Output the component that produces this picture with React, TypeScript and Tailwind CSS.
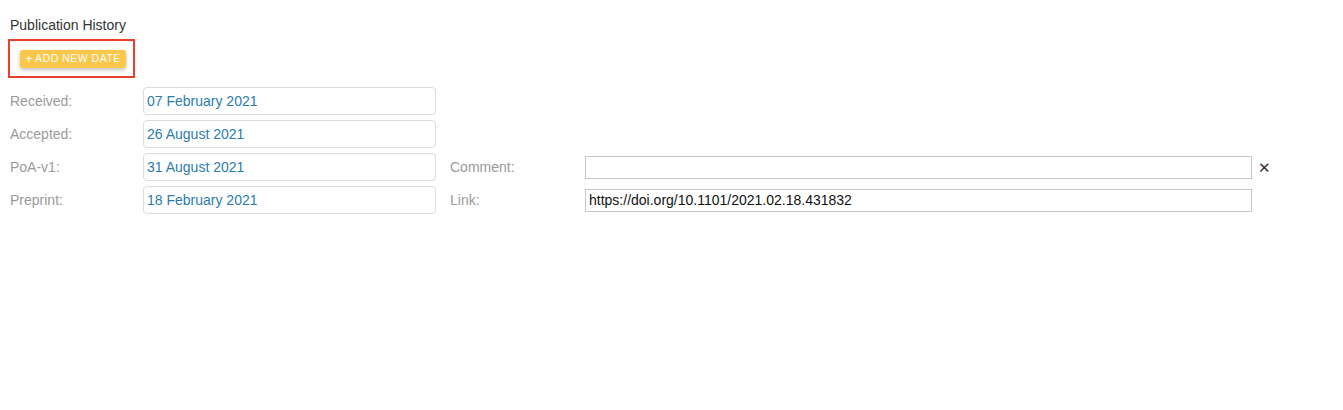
const rows = [
  { label: "Received:", date: "07 February 2021" },
  { label: "Accepted:", date: "26 August 2021" },
  { label: "PoA-v1:", date: "31 August 2021", extra: { label: "Comment:", value: "", remove: true } },
  { label: "Preprint:", date: "18 February 2021", extra: { label: "Link:", value: "https://doi.org/10.1101/2021.02.18.431832" } },
];

export default function App() {
  return (
    <div className="w-[1343px] h-[410px] bg-white pl-[10px] pt-[16px] font-['Helvetica','Liberation_Sans',Arial,sans-serif]">
      <h2 className="text-[14px] leading-[18px] text-[#333]">Publication History</h2>
      <div className="mt-[5px] ml-[-2px] w-[127px] h-[39px] border-2 border-[#e8402f] flex items-center pl-[10px]">
        <button className="h-[18px] px-[5px] rounded-[3px] bg-[#fbc74a] text-white text-[10.5px] font-medium tracking-[0.5px] flex items-center gap-[2px] shadow-[0_2px_4px_rgba(0,0,0,0.25)]">
          <span className="text-[13px] leading-none font-light">+</span>
          ADD NEW DATE
        </button>
      </div>
      <div className="mt-[9px] flex flex-col gap-[5px]">
        {rows.map((r) => (
          <div key={r.label} className="flex items-center h-[28px]">
            <div className="w-[133px] text-[14px] text-[#9a9a9a]">{r.label}</div>
            <div className="w-[293px] h-[28px] border border-[#dcdcdc] rounded-[4px] px-[3px] flex items-center text-[14px] text-[#2b7cae]">
              {r.date}
            </div>
            {r.extra && (
              <>
                <div className="ml-[14px] w-[135px] text-[14px] text-[#9a9a9a]">{r.extra.label}</div>
                <div className="w-[667px] h-[23px] border border-[#c8c8c8] px-[3px] flex items-center text-[14px] text-[#111]">
                  {r.extra.value}
                </div>
                {r.extra.remove && (
                  <span className="ml-[6px] text-[15px] leading-none text-[#333]">✕</span>
                )}
              </>
            )}
          </div>
        ))}
      </div>
    </div>
  );
}
